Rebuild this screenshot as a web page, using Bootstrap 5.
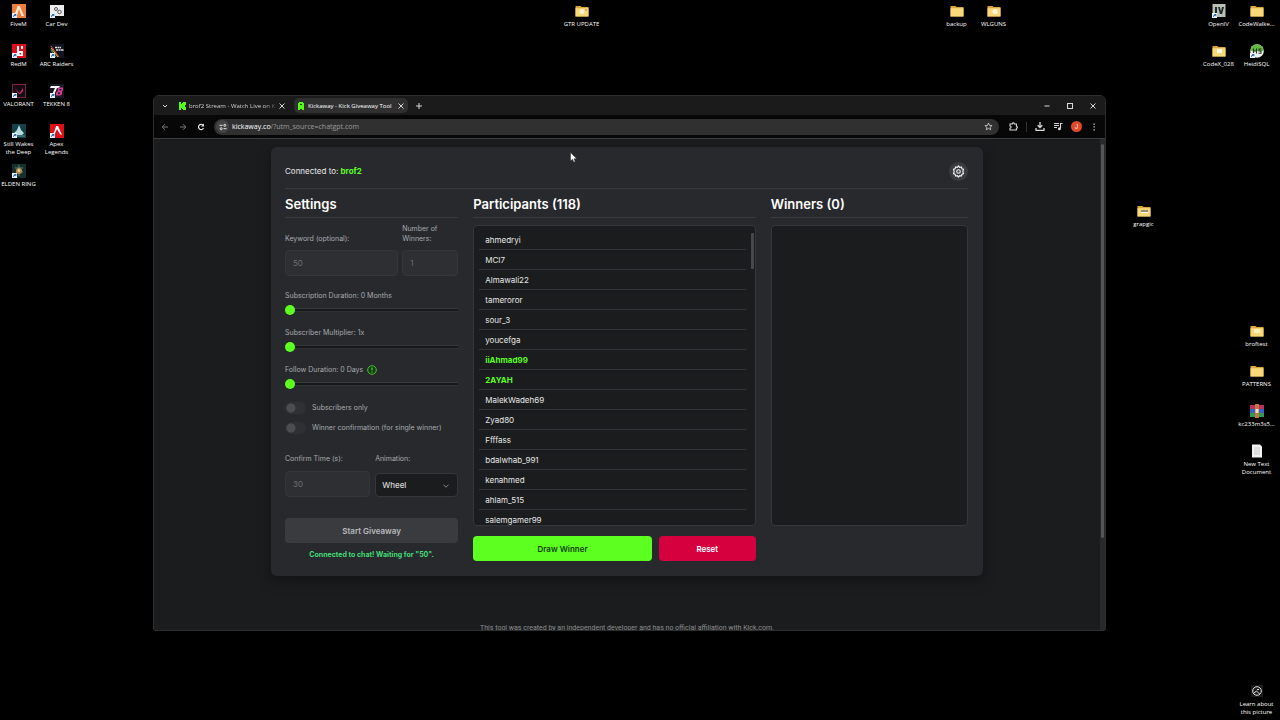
<!DOCTYPE html>
<html lang="en">
<head>
<meta charset="utf-8">
<meta name="viewport" content="width=device-width, initial-scale=1">
<title>Kickaway - Kick Giveaway Tool</title>
<link href="https://cdn.jsdelivr.net/npm/bootstrap@5.3.0/dist/css/bootstrap.min.css" rel="stylesheet">
<style>
:root { --kick: #5cff1f; --line: #383a3e; --panel: #27292d; --field: #2d2f33; --well: #1b1c1e; }
body { background: #000; color: #e8e8e8; font-family: Inter, "Open Sans", sans-serif; font-size: 8px; line-height: 14px; }
svg { display: block; flex: none; }
button { color: inherit; font: inherit; }
.desktop { min-height: 100vh; }

/* desktop shortcuts */
.shortcut { position: absolute; width: 37px; color: #fff; font: 6px/8px "Open Sans", sans-serif; text-decoration: none; white-space: nowrap; display: flex; flex-direction: column; align-items: center; text-align: center; gap: 2px; }
.shortcut svg { width: 16px; height: 14px; }

/* browser window */
.browser { position: absolute; left: 153px; right: 174px; top: 95px; bottom: 89px; background: #1c1c1d; border: 1px solid #2e2e2f; border-radius: 6px 6px 2px 2px; }
.tabstrip { height: 19px; background: #1b1b1c; font: 6px/14px "Open Sans", sans-serif; }
.tab-item { height: 15px; border-radius: 5px; padding: 0 3px; gap: 3px; white-space: nowrap; color: #cfcfcf; }
.tab-idle { width: 114px; padding: 0 0 0 6px; }
.tab-idle .tab-title { -webkit-mask-image: linear-gradient(90deg, #000 88%, #0004); }
.tab-open { width: 114px; background: #303031; color: #fff; }
.plain { background: none; border: 0; padding: 0; color: #d8d8d8; }
.winctl { gap: 15px; padding-right: 8px; }
.toolbar { height: 24px; background: #070707; border-bottom: 1px solid #3d3d3e; padding: 0 7px; gap: 10px; }
.omnibox { height: 16px; border-radius: 8px; background: #303031; padding: 0 6px 0 2px; gap: 3px; margin-left: -1px; }
.omnibox input { border: 0; background: none; padding: 0; width: 0; color: #9b9b9b; outline: 0; }
.omnibox label, .omnibox input { font: 7px/14px "Open Sans", sans-serif; }
.omnibox label { color: #fff; }
.siteinfo { width: 13px; height: 13px; border-radius: 50%; background: #454546; }
.vline { width: 1px; height: 10px; background: #333; }
.avatar-dot { width: 11px; height: 11px; border-radius: 50%; background: #e2492a; color: #fff; font-size: 6px; line-height: 11px; text-align: center; }
.tools { gap: 8px; }

/* page */
.viewport { min-height: 0; background: #1b1c1d; }
.page-body { padding: 8px 8px 0; min-width: 0; }
.pagebar { width: 5px; background: #29292a; padding: 5px 1px 0; }
.pagebar div { height: 81%; background: #555657; border-radius: 2px; }
.panel { background: var(--panel); max-width: 712px; margin: 0 auto; border-radius: 6px; padding: 14px 15px 14px 14px; box-shadow: 0 4px 14px rgba(0,0,0,.35); }
.panel-top { height: 28px; border-bottom: 1px solid var(--line); padding-bottom: 7px; }
.gear { width: 19px; height: 19px; border-radius: 50%; background: #3b3c41; border: 0; padding: 0; }
.kick { color: var(--kick); }
.cols { display: grid; grid-template-columns: 173fr 282fr 197fr; column-gap: 15px; }
.cols h2 { font-size: 13px; line-height: 26px; padding-top: 2px; font-weight: 600; color: #fff; margin: 0; border-bottom: 1px solid var(--line); }
.cap { color: #a9aaad; font-size: 7px; line-height: 10px; }
.field { height: 26px; border: 1px solid #34363a; background: var(--field); border-radius: 4px; color: #6d6e72; font-size: 8px; padding: 0 7px; width: 100%; min-width: 0; }
.pair { display: grid; align-items: end; }
.pair-key { grid-template-columns: 113fr 56fr; gap: 6px 4px; padding-top: 6px; margin-bottom: 13px; }
.pair-anim { grid-template-columns: 85fr 83fr; gap: 7px 5px; margin: 20px 0 21px; }
.pick { height: 24px; background-color: var(--well); color: #d8d8d8; font-weight: 500; appearance: none; padding: 0 6px; }
.pickwrap svg { position: absolute; right: 8px; top: 9px; pointer-events: none; }
.slide { margin-bottom: 11px; }
.slide label { line-height: 14px; margin-bottom: 2px; }
.slide input { appearance: none; display: block; width: 100%; height: 10px; margin: 0; background: linear-gradient(#36383c 0 1px, #17181a 1px 3px, #303236 3px) center / 100% 4px no-repeat; }
.slide input::-webkit-slider-thumb { appearance: none; width: 10px; height: 10px; border-radius: 50%; background: var(--kick); }
.toggles { margin-top: 12px; display: grid; row-gap: 7px; }
.toggle { height: 13px; gap: 6px; }
.toggle input { appearance: none; width: 21px; height: 12px; border-radius: 6px; margin: 0; background: radial-gradient(circle at 6px 6px, #4c4d51 0 4px, transparent 5px) #2e3034; }
.act { height: 25px; border: 0; border-radius: 4px; font-weight: 600; font-size: 8px; width: 100%; }
.act-idle { background: #3a3b3f; color: #b9babd; }
.act-draw { background: var(--kick); color: #14420a; }
.act-reset { background: #d6003f; color: #fff; }
.status { color: #43dc78; font-weight: 700; font-size: 7px; padding-top: 5px; }
.well { height: 301px; margin-top: 7px; background: var(--well); border: 1px solid #34363a; border-radius: 4px; overflow: hidden; }
.names { list-style: none; margin: 0; padding: 4px 4px 0 5px; min-width: 0; }
.names li { height: 20px; line-height: 20px; padding-left: 6px; border-bottom: 1px solid #313336; font-size: 8px; color: #e8e8e8; }
.names .sub { color: var(--kick); font-weight: 700; }
.listbar { width: 5px; padding: 7px 1px 0; }
.listbar div { height: 36px; background: #45474a; border-radius: 1px; }
.draws { display: grid; grid-template-columns: 179fr 97fr; gap: 7px; margin-top: 10px; }
.credit { color: #8d8e90; margin: 45px 0 0; text-align: center; white-space: nowrap; font-family: Roboto, sans-serif; font-size: 7px; }
.pointer { position: absolute; left: 570px; top: 152px; }
</style>
</head>
<body>
<svg width="0" height="0" class="position-absolute" aria-hidden="true">
  <symbol id="arrow" viewBox="0 0 16 14"><rect x="1" y="9" width="5" height="5" fill="#eef4fa"/><path d="M2.200 13V11.600L4 10.800H3V10h2.300v2.200h-.8v-.7L3 12.200V13z" fill="#2463a8"/></symbol>
  <symbol id="folder" viewBox="0 0 16 14"><path d="M1.500 2h5l1 1h7v9.500h-13z" fill="#d9a63b"/><path d="M1.500 4.200h13v8.300h-13z" fill="#f8d97a"/></symbol>
  <symbol id="cross" viewBox="0 0 8 8"><path d="M1.500 1.500l5 5m0-5l-5 5" stroke="currentColor" fill="none"/></symbol>
</svg>
<main class="desktop position-relative overflow-hidden">
  <a href="#" class="shortcut" style="left:0;top:4px"><svg viewBox="0 0 16 14"><rect x="1" width="14" height="14" fill="#ef7d3b"/><path d="M3 12L6.700 2h2L13 12h-2.500L8 5l-2 7z" fill="#ffe9d5"/><use href="#arrow"/></svg>FiveM</a>
  <a href="#" class="shortcut" style="left:38px;top:4px"><svg viewBox="0 0 16 14"><rect x="1" y="1" width="14" height="11" fill="#ececee"/><g fill="none" stroke="#555b60" stroke-width="1"><circle cx="7" cy="5" r="1.500"/><circle cx="10.500" cy="8" r="1.800"/></g><use href="#arrow"/></svg>Car Dev</a>
  <a href="#" class="shortcut" style="left:0;top:44px"><svg viewBox="0 0 16 14"><rect x="1" width="14" height="14" fill="#dc0f1b"/><path d="M6 2h2v5h4v5H6zM10 2h2v3h-2zM8.500 9v1.500h1.500V9z" fill="#fff"/><use href="#arrow"/></svg>RedM</a>
  <a href="#" class="shortcut" style="left:38px;top:44px"><svg viewBox="0 0 16 14"><rect x="1" width="14" height="14" fill="#121420"/><path d="M2 2l8 11" stroke="#e84c3b"/><path d="M2 4l7 9" stroke="#f3c744"/><path d="M2 6l5 7" stroke="#38b37c"/><path d="M6 3.500h6M7 6h8" stroke="#e6e4dc" stroke-width="1.500" stroke-dasharray="2 .5"/><use href="#arrow"/></svg>ARC Raiders</a>
  <a href="#" class="shortcut" style="left:0;top:84px"><svg viewBox="0 0 16 14"><rect x="1.500" y=".5" width="13" height="13" fill="#160c14" stroke="#7d2342"/><path d="M4 4l4 6h1.500zM12 4v3l-2 2.500H8.500z" fill="#c63a65"/><use href="#arrow"/></svg>VALORANT</a>
  <a href="#" class="shortcut" style="left:38px;top:84px"><svg viewBox="0 0 16 14"><rect x="1" width="14" height="14" fill="#191624"/><path d="M2 2h9l-1 2H8L5 11H3l3-7H1z" fill="#fff"/><path d="M9 3.500h5v3l-1 1v3l-2 1H7V8.500l1.500-1zM10.500 5v1.500h2V5zM9 8.500V10h2V8.500z" fill="#d23f8b" fill-rule="evenodd"/><use href="#arrow"/></svg>TEKKEN 8</a>
  <a href="#" class="shortcut" style="left:0;top:124px"><svg viewBox="0 0 16 14"><rect x="1" width="14" height="14" fill="#173f49"/><path d="M8 1l2 5 3 3-2 2H5L3 9l3-3z" fill="#b6dce0"/><path d="M2 12h12" stroke="#5c9aa3"/><use href="#arrow"/></svg>Still Wakes<br>the Deep</a>
  <a href="#" class="shortcut" style="left:38px;top:124px"><svg viewBox="0 0 16 14"><rect x="1" width="14" height="14" fill="#dd1018"/><path d="M7.200 2h1.800l4 9-2.200-1L8 5 6 9.500 4 11z" fill="#fff"/><use href="#arrow"/></svg>Apex<br>Legends</a>
  <a href="#" class="shortcut" style="left:0;top:164px"><svg viewBox="0 0 16 14"><rect x="1" width="14" height="14" fill="#16302f"/><path d="M8 1v11M4 4h8M5 8h7" stroke="#5f8066"/><circle cx="8" cy="7" r="3" fill="#b38a4e"/><circle cx="8" cy="6.500" r="1.300" fill="#e9d6a0"/><use href="#arrow"/></svg>ELDEN RING</a>
  <a href="#" class="shortcut" style="left:563px;top:4px"><svg viewBox="0 0 16 14"><use href="#folder"/><circle cx="8" cy="7.500" r="2.500" fill="#fff1cf"/><path d="M11 5h2v2h-2z" fill="#e8a07a"/></svg>GTR UPDATE</a>
  <a href="#" class="shortcut" style="left:938px;top:4px"><svg viewBox="0 0 16 14"><use href="#folder"/></svg>backup</a>
  <a href="#" class="shortcut" style="left:975px;top:4px"><svg viewBox="0 0 16 14"><use href="#folder"/><circle cx="9" cy="7.500" r="2.500" fill="#fff5dc"/></svg>WLGUNS</a>
  <a href="#" class="shortcut" style="right:43px;top:4px"><svg viewBox="0 0 16 14"><rect x="1.500" width="13" height="13" fill="#b9c0b4"/><path d="M4 3h2v7H4zM7 3h1.800L10 7.500 11 3h2l-2 7H9z" fill="#20262a"/><use href="#arrow"/></svg>OpenIV</a>
  <a href="#" class="shortcut" style="right:5px;top:4px"><svg viewBox="0 0 16 14"><use href="#folder"/></svg>CodeWalke...</a>
  <a href="#" class="shortcut" style="right:43px;top:44px"><svg viewBox="0 0 16 14"><use href="#folder"/><path d="M6 5h5v4H6z" fill="#fff8e8"/></svg>CodeX_028</a>
  <a href="#" class="shortcut" style="right:5px;top:44px"><svg viewBox="0 0 16 14"><circle cx="8" cy="7" r="6.800" fill="#eef2ec"/><path d="M1.200 7a6.800 6.800 0 0 1 13.600 0z" fill="#66b845"/><path d="M4.500 4.500v5M7.500 4.500v5M4.500 7h3M12.500 5H10v2h2v2.200H9.500" stroke="#1d3820" stroke-width="1.100" fill="none"/><use href="#arrow"/></svg>HeidiSQL</a>
  <a href="#" class="shortcut" style="right:118px;top:204px"><svg viewBox="0 0 16 14"><use href="#folder"/><path d="M5 6h7v2H5z" fill="#9b8f78"/><path d="M5 8h7v1H5z" fill="#fff"/></svg>grapgic</a>
  <a href="#" class="shortcut" style="right:5px;top:324px"><svg viewBox="0 0 16 14"><use href="#folder"/><path d="M5 5h6v4H5z" fill="#fff0b8"/></svg>broftest</a>
  <a href="#" class="shortcut" style="right:5px;top:364px"><svg viewBox="0 0 16 14"><use href="#folder"/></svg>PATTERNS</a>
  <a href="#" class="shortcut" style="right:5px;top:404px"><svg viewBox="0 0 16 14"><path d="M1 1h14v4H1z" fill="#b8335c"/><path d="M1 5h14v4H1z" fill="#3a62c4"/><path d="M1 9h14v4H1z" fill="#2f9a50"/><path d="M6 0h4v14H6z" fill="#c5773a"/><path d="M6.500 5h3v4h-3z" fill="#f4dfae"/></svg>kc233m3s5...</a>
  <a href="#" class="shortcut" style="right:5px;top:444px"><svg viewBox="0 0 16 14"><path d="M3 .5h8l2 2v11H3z" fill="#f3f3f3"/><path d="M5 4h6M5 6h6M5 8h6M5 10h6" stroke="#b8bcc0" stroke-width=".7"/></svg>New Text<br>Document</a>
  <a href="#" class="shortcut" style="right:5px;top:684px"><svg viewBox="0 0 16 14"><rect x="2" y="1" width="12" height="12" fill="#1b1b1b"/><circle cx="8" cy="7" r="4.300" fill="none" stroke="#e4e4e4"/><path d="M5 9l2.500-2 3 3M8 5.500h2" stroke="#e4e4e4" fill="none"/></svg>Learn about<br>this picture</a>

  <section class="browser d-flex flex-column overflow-hidden" aria-label="Browser">
    <div class="tabstrip d-flex align-items-center flex-shrink-0">
      <button class="plain ms-2" aria-label="Search tabs"><svg width="6" height="6" viewBox="0 0 6 6"><path d="M1 2l2 2 2-2" stroke="currentColor" fill="none"/></svg></button>
      <div class="tab-item tab-idle d-flex align-items-center ms-1">
        <svg width="8" height="8" viewBox="0 0 8 8"><path d="M1 0h2v2h1V1h1V0h3v3H7v2h1v3H5V7H4V6H3v2H1z" fill="#53fc18"/></svg>
        <span class="tab-title">brof2 Stream - Watch Live on K</span>
        <button class="plain ms-auto" aria-label="Close tab"><svg width="8" height="8"><use href="#cross"/></svg></button>
      </div>
      <div class="tab-item tab-open d-flex align-items-center ms-2">
        <svg width="8" height="8" viewBox="0 0 8 8"><path d="M1 1h1V0h4v1h1v7H5V7H3v1H1zM3 2v1h2V2z" fill="#53fc18" fill-rule="evenodd"/></svg>
        <span class="tab-title">Kickaway - Kick Giveaway Tool</span>
        <button class="plain ms-auto" aria-label="Close tab"><svg width="8" height="8"><use href="#cross"/></svg></button>
      </div>
      <button class="plain ms-2" aria-label="New tab"><svg width="6" height="6" viewBox="0 0 6 6"><path d="M3 0v6M0 3h6" stroke="currentColor"/></svg></button>
      <div class="winctl d-flex ms-auto">
        <button class="plain" aria-label="Minimize"><svg width="8" height="8" viewBox="0 0 8 8"><path d="M1.500 4h5" stroke="currentColor"/></svg></button>
        <button class="plain" aria-label="Maximize"><svg width="8" height="8" viewBox="0 0 8 8"><rect x="1.500" y="1.500" width="5" height="5" stroke="currentColor" fill="none"/></svg></button>
        <button class="plain" aria-label="Close"><svg width="8" height="8"><use href="#cross"/></svg></button>
      </div>
    </div>
    <div class="toolbar d-flex align-items-center flex-shrink-0">
      <button class="plain" aria-label="Back"><svg width="8" height="8" viewBox="0 0 8 8"><path d="M7 4H1.200M4 1.200L1.200 4 4 6.800" stroke="#777" fill="none"/></svg></button>
      <button class="plain" aria-label="Forward"><svg width="8" height="8" viewBox="0 0 8 8"><path d="M1 4h5.800M4 1.200L6.800 4 4 6.800" stroke="#777" fill="none"/></svg></button>
      <button class="plain" aria-label="Reload"><svg width="8" height="8" viewBox="0 0 8 8"><path d="M6.500 5A2.600 2.600 0 1 1 6 2.200" stroke="#e6e6e6" stroke-width="1.200" fill="none"/><path d="M7 .5v3H4z" fill="#e6e6e6"/></svg></button>
      <div class="omnibox d-flex align-items-center flex-grow-1">
        <span class="siteinfo d-flex align-items-center justify-content-center"><svg width="8" height="8" viewBox="0 0 8 8"><path d="M.5 2.300h3M4.500 5.700h3" stroke="#e6e6e6"/><circle cx="5.800" cy="2.300" r="1" fill="none" stroke="#e6e6e6"/><circle cx="2.200" cy="5.700" r="1" fill="none" stroke="#e6e6e6"/></svg></span>
        <div class="d-flex flex-grow-1"><label for="url">kickaway.co</label><input id="url" class="flex-grow-1" value="/?utm_source=chatgpt.com"></div>
        <button class="plain" aria-label="Bookmark"><svg width="9" height="9" viewBox="0 0 9 9"><path d="M4.500 1l1 2.400 2.600.2-2 1.700.6 2.500-2.200-1.400-2.200 1.400.6-2.500-2-1.700 2.600-.2z" stroke="currentColor" stroke-width=".8" fill="none"/></svg></button>
      </div>
      <div class="tools d-flex align-items-center">
        <button class="plain" aria-label="Extensions"><svg width="9" height="9" viewBox="0 0 9 9"><path d="M1 2h2.200a1.100 1.100 0 0 1 2.200 0h2v2.200a1 1 0 0 1 0 2V8H1V6.200a1.100 1.100 0 0 0 0-2.200z" stroke="currentColor" stroke-width="1.100" fill="none"/></svg></button>
        <span class="vline"></span>
        <button class="plain" aria-label="Downloads"><svg width="10" height="9" viewBox="0 0 10 9"><path d="M5 0v5M2.700 3.300L5 5.500l2.300-2.200M1 6v2.300h8V6" stroke="currentColor" stroke-width="1.300" fill="none"/></svg></button>
        <button class="plain" aria-label="Media"><svg width="10" height="9" viewBox="0 0 10 9"><path d="M1 1.500h5M1 3.500h5M1 5.500h3" stroke="currentColor" stroke-width="1.100"/><path d="M7.500 6.500v-5H9.500" stroke="currentColor" stroke-width="1.100" fill="none"/><circle cx="6.400" cy="6.700" r="1.500" fill="currentColor"/></svg></button>
        <button class="plain avatar-dot text-white" aria-label="Profile">J</button>
        <button class="plain" aria-label="Menu"><svg width="8" height="8" viewBox="0 0 8 8"><path d="M3.500.500h1.300v1.300H3.500zM3.500 3.300h1.300v1.300H3.500zM3.500 6.200h1.300v1.300H3.500z" fill="currentColor"/></svg></button>
      </div>
    </div>

    <div class="viewport d-flex flex-grow-1">
      <div class="page-body flex-grow-1 overflow-hidden">
        <div class="panel">
          <header class="panel-top d-flex align-items-center justify-content-between">
            <span>Connected to: <b class="kick">brof2</b></span>
            <button class="gear d-flex align-items-center justify-content-center" aria-label="Options"><svg width="13" height="13" viewBox="0 0 16 16"><path d="M8 1.200l1.400 1.700 2.200-.5.5 2.200 2.100.8L13.300 8l.9 2.600-2.100.8-.5 2.200-2.200-.5L8 14.800l-1.400-1.700-2.200.5-.5-2.200-2.100-.8L2.700 8l-.9-2.600 2.100-.8.5-2.200 2.200.5z" stroke="#f4f4f4" stroke-width="1.400" stroke-linejoin="round" fill="none"/><circle cx="8" cy="8" r="2.200" stroke="#f4f4f4" stroke-width="1.400" fill="none"/></svg></button>
          </header>
          <div class="cols">
            <form>
              <h2>Settings</h2>
              <div class="pair pair-key">
                <label class="cap" for="keyword">Keyword (optional):</label>
                <label class="cap" for="count">Number of Winners:</label>
                <input class="field" id="keyword" value="50" disabled>
                <input class="field" id="count" value="1" disabled>
              </div>
              <div class="slide"><label class="cap d-block" for="subdur">Subscription Duration: 0 Months</label><input type="range" id="subdur" min="0" max="12" value="0"></div>
              <div class="slide"><label class="cap d-block" for="mult">Subscriber Multiplier: 1x</label><input type="range" id="mult" min="1" max="10" value="1"></div>
              <div class="slide"><label class="cap d-flex align-items-center gap-1" for="follow">Follow Duration: 0 Days <svg width="10" height="10" viewBox="0 0 10 10"><circle cx="5" cy="5" r="4.300" fill="#173d16" stroke="#43c52a"/><path d="M5 2.500v3M5 6.500v1" stroke="#53fc18"/></svg></label><input type="range" id="follow" min="0" max="90" value="0"></div>
              <div class="toggles">
                <div class="toggle d-flex align-items-center"><input type="checkbox" role="switch" id="subs"><label class="cap" for="subs">Subscribers only</label></div>
                <div class="toggle d-flex align-items-center"><input type="checkbox" role="switch" id="confirm"><label class="cap" for="confirm">Winner confirmation (for single winner)</label></div>
              </div>
              <div class="pair pair-anim">
                <label class="cap" for="time">Confirm Time (s):</label>
                <label class="cap" for="anim">Animation:</label>
                <input class="field" id="time" value="30" disabled>
                <div class="pickwrap position-relative"><select class="field pick" id="anim"><option>Wheel</option></select><svg width="8" height="8" viewBox="0 0 8 8"><path d="M1.500 2.800L4 5.200l2.500-2.400" stroke="#a0a0a0" stroke-width=".8" fill="none"/></svg></div>
              </div>
              <button type="button" class="act act-idle">Start Giveaway</button>
              <div class="status text-center">Connected to chat! Waiting for "50".</div>
            </form>
            <section>
              <h2>Participants (118)</h2>
              <div class="well d-flex">
                <ul class="names flex-grow-1">
                  <li>ahmedryi</li><li>MCI7</li><li>Almawali22</li><li>tameroror</li><li>sour_3</li><li>youcefga</li>
                  <li class="sub">iiAhmad99</li><li class="sub">2AYAH</li>
                  <li>MalekWadeh69</li><li>Zyad80</li><li>Ffffass</li><li>bdalwhab_991</li><li>kenahmed</li><li>ahlam_515</li><li>salemgamer99</li>
                </ul>
                <div class="listbar"><div></div></div>
              </div>
              <div class="draws"><button class="act act-draw">Draw Winner</button><button class="act act-reset">Reset</button></div>
            </section>
            <section>
              <h2>Winners (0)</h2>
              <div class="well"></div>
            </section>
          </div>
        </div>
        <p class="credit">This tool was created by an independent developer and has no official affiliation with Kick.com.</p>
      </div>
      <div class="pagebar"><div></div></div>
    </div>
  </section>

  <svg class="pointer" width="8" height="11" viewBox="0 0 8 11" aria-hidden="true"><path d="M.5.500v8.500l2-1.800 1.300 3 1.400-.6L4 6.800h2.800z" fill="#fff" stroke="#222" stroke-width=".5"/></svg>
</main>
<script src="https://cdn.jsdelivr.net/npm/bootstrap@5.3.0/dist/js/bootstrap.bundle.min.js"></script>
</body>
</html>
